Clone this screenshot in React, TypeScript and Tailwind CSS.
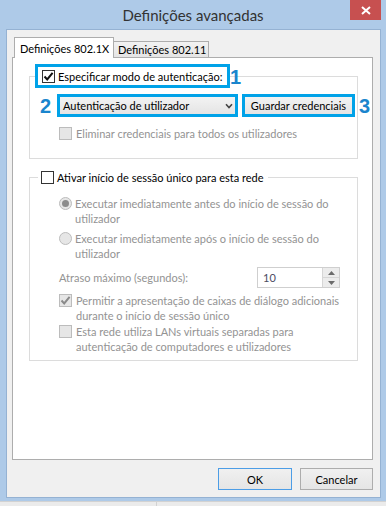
import React from 'react';

function Check({ checked, disabled }: { checked?: boolean; disabled?: boolean }) {
  return (
    <span
      className={`w-[13px] h-[13px] shrink-0 border flex items-center justify-center ${
        disabled ? 'border-[#bcbcbc] bg-[#e6e6e6]' : 'border-[#333333] bg-white'
      }`}
    >
      {checked && (
        <svg width="11" height="11" viewBox="0 0 11 11">
          <path d="M1.5 5.5 L4.2 8.4 L9.6 1.8" fill="none" stroke={disabled ? '#8a8a8a' : '#111111'} strokeWidth="2" />
        </svg>
      )}
    </span>
  );
}

function Radio({ checked }: { checked?: boolean }) {
  return (
    <span className="w-[13px] h-[13px] shrink-0 rounded-full border border-[#bcbcbc] bg-[#e6e6e6] flex items-center justify-center">
      {checked && <span className="w-[7px] h-[7px] rounded-full bg-[#8c8c8c]" />}
    </span>
  );
}

export default function App() {
  return (
    <div className="w-[386px] h-[506px] bg-[#aecae8] flex flex-col overflow-hidden whitespace-nowrap font-['Lato',sans-serif] text-[11px] leading-[15px] text-black">
      {/* title bar */}
      <div className="relative h-[29px] shrink-0 flex items-center justify-center">
        <span className="text-[15px] text-[#333333] leading-[20px]">Definições avançadas</span>
        <div className="absolute top-0 right-[5px] w-[31px] h-[20px] bg-[#c75050] flex items-center justify-center">
          <svg width="10" height="9" viewBox="0 0 10 9">
            <path d="M1 1 L9 8 M9 1 L1 8" stroke="white" strokeWidth="2" />
          </svg>
        </div>
      </div>

      {/* client area */}
      <div className="ml-[6px] w-[375px] h-[469px] shrink-0 border border-[#95b2d3] bg-[#f0f0f0] flex flex-col pl-[5px] pr-[7px] pt-[7px]">
        {/* tabs */}
        <div className="flex items-end ml-[2px]">
          <div className="relative z-10 -mb-[1px] h-[21px] w-[100px] border border-b-0 border-[#adadad] bg-white px-[5px] flex items-center">
            Definições 802.1X
          </div>
          <div className="h-[16px] w-[95px] border border-l-0 border-b-0 border-[#adadad] bg-gradient-to-b from-[#f2f2f2] to-[#e5e5e5] px-[4px] flex items-center">
            Definições 802.11
          </div>
        </div>

        {/* panel */}
        <div className="h-[403px] border border-[#adadad] bg-white flex flex-col">
          {/* group 1 */}
          <fieldset className="ml-[16px] mt-[6px] w-[329px] min-w-0 border border-[#dcdcdc] pb-[17px]">
            <legend className="ml-[5px] relative">
              <div className="w-[195px] h-[24px] border-[3px] border-[#00a2e8] flex items-center pl-[4px] gap-[3px]">
                <Check checked />
                <span>Especificar modo de autenticação:</span>
              </div>
              <span className="absolute left-[195px] top-[3px] font-['Liberation_Sans',sans-serif] font-bold text-[20px] leading-[20px] text-[#1a85cd]">
                1
              </span>
            </legend>

            <div className="flex items-center mt-[6px]">
              <span className="shrink-0 ml-[10px] w-[17px] font-['Liberation_Sans',sans-serif] font-bold text-[20px] leading-[20px] text-[#1a85cd]">
                2
              </span>
              <div className="shrink-0 w-[181px] h-[23px] border-[3px] border-[#00a2e8] bg-gradient-to-b from-[#f3f3f3] to-[#e4e4e4] flex items-center justify-between pl-[3px] pr-[2px]">
                <span>Autenticação de utilizador</span>
                <svg width="8" height="6" viewBox="0 0 8 6">
                  <path d="M1 1.2 L4 4.5 L7 1.2" fill="none" stroke="#444444" strokeWidth="1.6" />
                </svg>
              </div>
              <div className="shrink-0 ml-[4px] w-[113px] h-[23px] border-[3px] border-[#00a2e8] bg-gradient-to-b from-[#f3f3f3] to-[#e4e4e4] flex items-center justify-center">
                Guardar credenciais
              </div>
              <span className="shrink-0 ml-[4px] font-['Liberation_Sans',sans-serif] font-bold text-[20px] leading-[20px] text-[#1a85cd]">
                3
              </span>
            </div>

            <div className="flex items-center ml-[29px] mt-[9px] gap-[4px] text-[#939393]">
              <Check disabled />
              <span>Eliminar credenciais para todos os utilizadores</span>
            </div>
          </fieldset>

          {/* group 2 */}
          <fieldset className="ml-[16px] mt-[11px] w-[329px] min-w-0 border border-[#dcdcdc] pb-[6px]">
            <legend className="ml-[8px] pl-[3px] pr-[4px]">
              <div className="flex items-center gap-[3px]">
                <Check />
                <span>Ativar início de sessão único para esta rede</span>
              </div>
            </legend>

            <div className="flex items-start ml-[29px] mt-[11px] gap-[3px] text-[#939393]">
              <span className="mt-[1px]">
                <Radio checked />
              </span>
              <span>
                Executar imediatamente antes do início de sessão do
                <br />
                utilizador
              </span>
            </div>

            <div className="flex items-start ml-[29px] mt-[5px] gap-[3px] text-[#939393]">
              <span className="mt-[1px]">
                <Radio />
              </span>
              <span>
                Executar imediatamente após o início de sessão do
                <br />
                utilizador
              </span>
            </div>

            <div className="flex items-center ml-[29px] mr-[17px] mt-[6px] h-[21px] text-[#939393]">
              <span>Atraso máximo (segundos):</span>
              <div className="ml-auto w-[83px] h-[21px] border border-[#cfcfcf] bg-white flex">
                <span className="flex-1 pl-[5px] flex items-center text-[#4c4c63]">10</span>
                <div className="w-[17px] border-l border-[#d6d6d6] bg-[#ececec] flex flex-col">
                  <div className="flex-1 flex items-center justify-center border-b border-[#d6d6d6]">
                    <svg width="7" height="4" viewBox="0 0 7 4">
                      <path d="M0 4 L3.5 0 L7 4 Z" fill="#6b6b6b" />
                    </svg>
                  </div>
                  <div className="flex-1 flex items-center justify-center">
                    <svg width="7" height="4" viewBox="0 0 7 4">
                      <path d="M0 0 L3.5 4 L7 0 Z" fill="#6b6b6b" />
                    </svg>
                  </div>
                </div>
              </div>
            </div>

            <div className="flex items-start ml-[29px] mt-[5px] gap-[4px] text-[#939393]">
              <span className="mt-[1px]">
                <Check checked disabled />
              </span>
              <span>
                Permitir a apresentação de caixas de diálogo adicionais
                <br />
                durante o início de sessão único
              </span>
            </div>

            <div className="flex items-start ml-[29px] mt-[1px] gap-[4px] text-[#939393]">
              <span className="mt-[1px]">
                <Check disabled />
              </span>
              <span>
                Esta rede utiliza LANs virtuais separadas para
                <br />
                autenticação de computadores e utilizadores
              </span>
            </div>
          </fieldset>
        </div>

        {/* buttons */}
        <div className="flex justify-end gap-[8px] mt-[8px]">
          <button className="w-[74px] h-[22px] border border-[#4c9de6] bg-gradient-to-b from-[#f0f0f0] to-[#e5e5e5]">
            OK
          </button>
          <button className="w-[73px] h-[22px] border border-[#adadad] bg-gradient-to-b from-[#f0f0f0] to-[#e5e5e5]">
            Cancelar
          </button>
        </div>
      </div>

      <div className="mt-[3px] flex-1 bg-[#ebebeb] border-t border-[#d2d2d2] flex">
        <div className="w-[157px] border-r border-[#d2d2d2]" />
      </div>
    </div>
  );
}
